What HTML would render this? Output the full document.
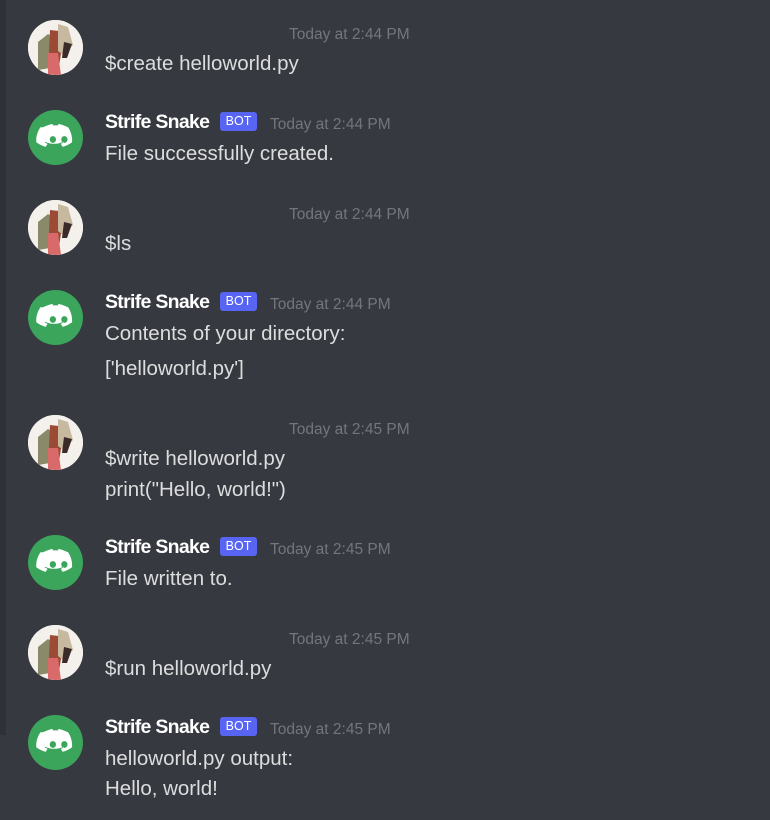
<html><head><style>
body{margin:0;width:770px;height:820px;background:#36393f;position:relative;overflow:hidden;font-family:"Liberation Sans",sans-serif}
.strip{position:absolute;left:0;top:0;width:6px;height:735px;background:#2f3136}
.t{position:absolute;left:105px;color:#dcddde;font-size:20.5px;white-space:nowrap;line-height:22px}
.ts{position:absolute;color:#72767d;font-size:15.5px;line-height:16px;white-space:nowrap}
.n{position:absolute;left:105px;color:#fff;font-size:19.5px;font-weight:bold;line-height:22px;letter-spacing:-0.7px}
.b{position:absolute;left:220px;width:37px;height:19px;background:#5865f2;border-radius:3px;color:#fff;font-size:12.5px;line-height:19px;text-align:center}
.av{position:absolute;left:28px;width:55px;height:55px;border-radius:50%;overflow:hidden}
.g{background:#3ba55c}
.u{background:#f4f1ec}
</style></head><body>
<div class="strip"></div>
<svg width="0" height="0" style="position:absolute"><defs>
<symbol id="d" viewBox="0 0 55 55"><g transform="translate(27.5 27.5) scale(1.2) translate(-27.5 -27.5)"><path fill="#fff" d="M17 19c3-1.5 6-2.5 8-2.8l.6 1.3c1.2-.2 2.6-.2 3.8 0l.6-1.3c2 .3 5 1.3 8 2.8 2.5 3.8 3.6 8 3.3 12.5-2.7 2-5.3 3.1-7.8 3.8l-1.6-2.5c.9-.3 1.7-.7 2.5-1.2l-.6-.5c-4.8 2.2-10 2.2-14.8 0l-.6.5c.8.5 1.6.9 2.5 1.2l-1.6 2.5c-2.5-.7-5.1-1.8-7.8-3.8-.3-4.5.8-8.7 3.5-12.5zM22.7 29.2a2.6 2.8 0 1 0 0-.1zM32.3 29.2a2.6 2.8 0 1 0 0-.1z"/></g></symbol>
<symbol id="u" viewBox="0 0 55 55"><rect width="55" height="55" fill="#f4f1ec"/><path d="M10 22l10-8 6 4-4 30-12 2z" fill="#8a8a6a"/><path d="M22 10l9 1 3 16-4 26h-10z" fill="#9c4a35"/><path d="M30 4l10 3 5 18-10 10-5-4z" fill="#c7b8a0"/><path d="M20 33l10 0 3 22h-13z" fill="#d96a6a"/><path d="M36 22l8 2-5 14h-5z" fill="#3a2a28"/></symbol>
</defs></svg>

<div class="av u" style="top:20px"><svg width="55" height="55" viewBox="0 0 55 55"><use href="#u"/></svg></div>
<div class="ts" style="left:289px;top:27px">Today at 2:44 PM</div>
<div class="t" style="top:53px">$create helloworld.py</div>

<div class="av g" style="top:110px"><svg width="55" height="55" viewBox="0 0 55 55"><use href="#d"/></svg></div>
<div class="n" style="top:111px">Strife Snake</div><div class="b" style="top:112px">BOT</div>
<div class="ts" style="left:270px;top:117px">Today at 2:44 PM</div>
<div class="t" style="top:143px">File successfully created.</div>

<div class="av u" style="top:200px"><svg width="55" height="55" viewBox="0 0 55 55"><use href="#u"/></svg></div>
<div class="ts" style="left:289px;top:207px">Today at 2:44 PM</div>
<div class="t" style="top:233px">$ls</div>

<div class="av g" style="top:290px"><svg width="55" height="55" viewBox="0 0 55 55"><use href="#d"/></svg></div>
<div class="n" style="top:291px">Strife Snake</div><div class="b" style="top:292px">BOT</div>
<div class="ts" style="left:270px;top:297px">Today at 2:44 PM</div>
<div class="t" style="top:323px">Contents of your directory:</div>
<div class="t" style="top:358px">['helloworld.py']</div>

<div class="av u" style="top:415px"><svg width="55" height="55" viewBox="0 0 55 55"><use href="#u"/></svg></div>
<div class="ts" style="left:289px;top:422px">Today at 2:45 PM</div>
<div class="t" style="top:448px">$write helloworld.py</div>
<div class="t" style="top:479px">print("Hello, world!")</div>

<div class="av g" style="top:535px"><svg width="55" height="55" viewBox="0 0 55 55"><use href="#d"/></svg></div>
<div class="n" style="top:536px">Strife Snake</div><div class="b" style="top:537px">BOT</div>
<div class="ts" style="left:270px;top:542px">Today at 2:45 PM</div>
<div class="t" style="top:568px">File written to.</div>

<div class="av u" style="top:625px"><svg width="55" height="55" viewBox="0 0 55 55"><use href="#u"/></svg></div>
<div class="ts" style="left:289px;top:632px">Today at 2:45 PM</div>
<div class="t" style="top:658px">$run helloworld.py</div>

<div class="av g" style="top:715px"><svg width="55" height="55" viewBox="0 0 55 55"><use href="#d"/></svg></div>
<div class="n" style="top:716px">Strife Snake</div><div class="b" style="top:717px">BOT</div>
<div class="ts" style="left:270px;top:722px">Today at 2:45 PM</div>
<div class="t" style="top:748px">helloworld.py output:</div>
<div class="t" style="top:778px">Hello, world!</div>
</body></html>
